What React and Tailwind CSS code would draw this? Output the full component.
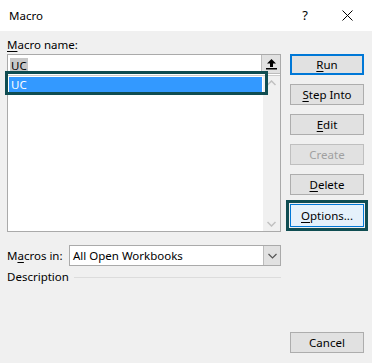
import React from 'react'

const font = { fontFamily: '"Segoe UI", "Noto Sans", "Open Sans", sans-serif' }

const Btn = ({ u, rest, className = '' }) => (
  <div className={`h-[21px] w-[74px] flex items-center justify-center text-[11.5px] leading-none ${className}`}>
    {u ? <span className="underline underline-offset-2 decoration-1">{u}</span> : null}
    <span>{rest}</span>
  </div>
)

export default function App() {
  return (
    <div className="w-[372px] h-[363px] bg-[#f0f0f0] text-black flex flex-col overflow-hidden" style={font}>
      {/* title bar */}
      <div className="h-[31px] shrink-0 bg-white flex items-center text-[11.5px]">
        <div className="pl-[9px] flex-1">Macro</div>
        <div className="w-[14px] text-center mr-[30px] text-[13px]">?</div>
        <svg width="11" height="11" viewBox="0 0 11 11" className="mr-[19px]">
          <path d="M0.5 0.5 L10.5 10.5 M10.5 0.5 L0.5 10.5" stroke="#000" strokeWidth="1" />
        </svg>
      </div>

      <div className="flex flex-1">
        {/* left column */}
        <div className="ml-[7px] w-[274px] flex flex-col">
          <div className="h-[23px] pt-[6px] text-[11.5px] leading-[16px]">
            <span className="underline underline-offset-2 decoration-1">M</span>acro name:
          </div>

          <div className="relative border border-[#aaaaaa] bg-white h-[178px] flex flex-col">
            {/* text input row */}
            <div className="h-[20px] flex">
              <div className="flex-1 flex items-center pl-[2px]">
                <span className="bg-[#c8c8c8] text-[11.5px] leading-[15px] px-[1px]">UC</span>
              </div>
              <div className="w-[19px] h-[19px] bg-[#e1e1e1] border-l border-b border-[#bcbcbc] flex items-center justify-center">
                <svg width="11" height="12" viewBox="0 0 11 12">
                  <path d="M5.5 1 L1 5.5 L4 5.5 L4 9 L7 9 L7 5.5 L10 5.5 Z" fill="#000" />
                  <rect x="0" y="10" width="11" height="1.5" fill="#000" />
                </svg>
              </div>
            </div>
            {/* list */}
            <div className="flex flex-1 border-t border-[#cccccc]">
              <div className="flex-1 pt-[1px] pl-[1px]">
                <div className="h-[16px] bg-[#3399ff] text-white text-[11.5px] leading-[16px] pl-[2px] mr-[1px]">UC</div>
              </div>
              <div className="w-[17px] bg-[#f0f0f0] flex flex-col justify-between items-center py-[4px]">
                <svg width="9" height="6" viewBox="0 0 9 6">
                  <path d="M0.5 5 L4.5 1 L8.5 5" stroke="#c0c0c0" strokeWidth="1.5" fill="none" />
                </svg>
                <svg width="9" height="6" viewBox="0 0 9 6">
                  <path d="M0.5 1 L4.5 5 L8.5 1" stroke="#c0c0c0" strokeWidth="1.5" fill="none" />
                </svg>
              </div>
            </div>
            {/* highlight frame */}
            <div className="absolute left-[-3px] top-[16px] w-[263px] h-[24px] border-[3px] border-[#0f4d52]" />
          </div>

          <div className="mt-[13px] flex items-center h-[21px]">
            <div className="w-[62px] text-[11.5px]">
              M<span className="underline underline-offset-2 decoration-1">a</span>cros in:
            </div>
            <div className="flex-1 h-[21px] border border-[#aaaaaa] bg-white flex">
              <div className="flex-1 text-[11.5px] leading-[19px] pl-[3px]">All Open Workbooks</div>
              <div className="w-[17px] bg-[#e1e1e1] border-l border-[#bcbcbc] flex items-center justify-center">
                <svg width="9" height="6" viewBox="0 0 9 6">
                  <path d="M0.5 1 L4.5 5 L8.5 1" stroke="#555" strokeWidth="1.2" fill="none" />
                </svg>
              </div>
            </div>
          </div>

          <div className="mt-[3px] flex items-center h-[16px]">
            <div className="text-[11.5px]">Description</div>
            <div className="flex-1 ml-[5px] h-px bg-[#dcdcdc]" />
          </div>
        </div>

        {/* right column */}
        <div className="ml-[9px] flex flex-col pt-[23px] pb-[10px]">
          <div className="flex flex-col gap-[9px]">
            <Btn u="R" rest="un" className="bg-[#e1e1e1] border-2 border-[#0078d7]" />
            <Btn u="S" rest="tep Into" className="bg-[#e1e1e1] border border-[#adadad]" />
            <Btn u="E" rest="dit" className="bg-[#e1e1e1] border border-[#adadad]" />
            <Btn rest="Create" className="bg-[#e1e1e1] border border-[#bfbfbf] text-[#a0a0a0]" />
            <Btn u="D" rest="elete" className="bg-[#e1e1e1] border border-[#adadad]" />
            <div className="relative">
              <Btn u="O" rest="ptions..." className="h-[23px] bg-[#e5f1fb] border border-[#0078d7]" />
              <div className="absolute left-[-4px] top-[-4px] right-[-4px] bottom-[-4px] border-[3px] border-[#0f4d52]" />
            </div>
          </div>
          <Btn rest="Cancel" className="mt-auto w-[73px] bg-[#e1e1e1] border border-[#adadad]" />
        </div>
      </div>
    </div>
  )
}
